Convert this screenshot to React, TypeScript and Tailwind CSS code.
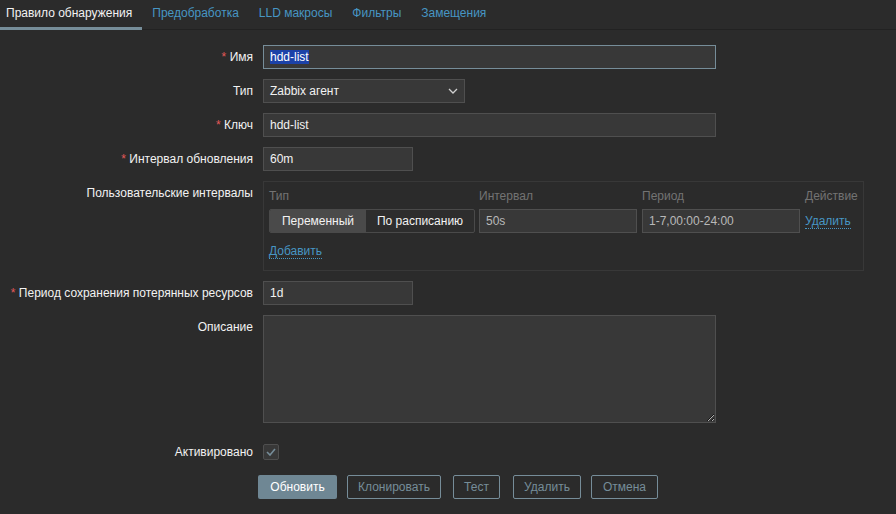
import type { ReactNode } from "react";

const TABS = ["Правило обнаружения", "Предобработка", "LLD макросы", "Фильтры", "Замещения"];

function Label({ text, required }: { text: string; required?: boolean }) {
  return (
    <div className="h-[24px] w-[253px] shrink-0 whitespace-nowrap text-right leading-[24px] text-[#f2f2f2]">
      {required && <span className="text-[#e45959]">* </span>}
      {text}
    </div>
  );
}

function Row({ label, required, children, className }: { label: string; required?: boolean; children: ReactNode; className?: string }) {
  return (
    <div className={`flex gap-[10px] ${className ?? ""}`}>
      <Label text={label} required={required} />
      <div>{children}</div>
    </div>
  );
}

function TextBox({ value, width, dim }: { value: string; width: string; dim?: boolean }) {
  return (
    <input
      readOnly
      value={value}
      className={`block h-[24px] ${width} border border-[#4f4f4f] bg-[#383838] px-[6px] outline-none ${dim ? "text-[#b8b8b8]" : "text-[#f2f2f2]"}`}
    />
  );
}

function ActionLink({ children }: { children: ReactNode }) {
  return <span className="border-b border-dotted border-[#4796c4] leading-[14px] text-[#4796c4]">{children}</span>;
}

export default function App() {
  return (
    <div className="min-h-[514px] w-[896px] bg-[#2b2b2b] font-['Liberation_Sans',Arial,sans-serif] text-[12px] text-[#f2f2f2]">
      <nav className="flex h-[30px] shadow-[inset_0_-1px_0_#222]">
        {TABS.map((tab, i) => (
          <div
            key={tab}
            className={`flex items-center border-b-[3px] pb-[2px] ${
              i === 0 ? "border-[#768d99] pl-[6px] pr-[10px] text-[#f2f2f2]" : "border-transparent px-[10px] text-[#4796c4]"
            }`}
          >
            {tab}
          </div>
        ))}
      </nav>

      <form className="flex flex-col pt-[15px]">
        <Row label="Имя" required>
          <div className="h-[24px] w-[453px] border border-[#768d99] bg-[#383838] px-[6px] leading-[22px]">
            <span className="bg-[#1c42a8] text-white">hdd-list</span>
          </div>
        </Row>

        <Row label="Тип" className="mt-[10px]">
          <div className="flex h-[24px] w-[202px] items-center justify-between border border-[#4f4f4f] bg-[#383838] pl-[6px] pr-[6px]">
            <span>Zabbix агент</span>
            <svg width="10" height="6" viewBox="0 0 10 6" fill="none">
              <path d="M1 1l4 4 4-4" stroke="#d0d0d0" strokeWidth="1.3" />
            </svg>
          </div>
        </Row>

        <Row label="Ключ" required className="mt-[10px]">
          <TextBox value="hdd-list" width="w-[453px]" />
        </Row>

        <Row label="Интервал обновления" required className="mt-[10px]">
          <TextBox value="60m" width="w-[150px]" />
        </Row>

        <Row label="Пользовательские интервалы" className="mt-[10px]">
          <div className="h-[90px] w-[601px] border border-[#383838] px-[5px] pt-[5px]">
            <div className="flex h-[18px] items-center text-[#737373]">
              <span className="w-[210px]">Тип</span>
              <span className="w-[163px]">Интервал</span>
              <span className="w-[163px]">Период</span>
              <span>Действие</span>
            </div>
            <div className="mt-[4px] flex items-center">
              <div className="flex h-[24px] w-[206px] overflow-hidden rounded-[2px] border border-[#4a4a4a] bg-[#2d2d2d]">
                <span className="flex w-[96px] items-center justify-center bg-[#4a4a4a]">Переменный</span>
                <span className="flex flex-1 items-center justify-center">По расписанию</span>
              </div>
              <div className="ml-[4px]">
                <TextBox value="50s" width="w-[158px]" dim />
              </div>
              <div className="ml-[5px]">
                <TextBox value="1-7,00:00-24:00" width="w-[158px]" dim />
              </div>
              <div className="ml-[5px]">
                <ActionLink>Удалить</ActionLink>
              </div>
            </div>
            <div className="mt-[6px] flex h-[24px] items-center">
              <ActionLink>Добавить</ActionLink>
            </div>
          </div>
        </Row>

        <Row label="Период сохранения потерянных ресурсов" required className="mt-[10px]">
          <TextBox value="1d" width="w-[150px]" />
        </Row>

        <Row label="Описание" className="mt-[10px]">
          <textarea
            readOnly
            className="block h-[108px] w-[453px] resize border border-[#4f4f4f] bg-[#383838] px-[6px] py-[4px] text-[#f2f2f2] outline-none"
          />
        </Row>

        <Row label="Активировано" className="mt-[17px]">
          <div className="flex h-[24px] items-center">
            <div className="flex h-[16px] w-[16px] items-center justify-center rounded-[2px] border border-[#4f4f4f] bg-[#383838]">
              <svg width="10" height="8" viewBox="0 0 10 8" fill="none">
                <path d="M1 4l3 3 5-6" stroke="#768d99" strokeWidth="1.6" />
              </svg>
            </div>
          </div>
        </Row>

        <div className="ml-[258px] mt-[11px] flex">
          <button type="button" className="h-[24px] w-[79px] rounded-[2px] bg-[#6f8794] text-white">
            Обновить
          </button>
          <button type="button" className="ml-[10px] h-[24px] w-[94px] rounded-[2px] border border-[#768d99] text-[#768d99]">
            Клонировать
          </button>
          <button type="button" className="ml-[12px] h-[24px] w-[47px] rounded-[2px] border border-[#768d99] text-[#768d99]">
            Тест
          </button>
          <button type="button" className="ml-[13px] h-[24px] w-[68px] rounded-[2px] border border-[#768d99] text-[#768d99]">
            Удалить
          </button>
          <button type="button" className="ml-[10px] h-[24px] w-[67px] rounded-[2px] border border-[#768d99] text-[#768d99]">
            Отмена
          </button>
        </div>
      </form>
    </div>
  );
}
